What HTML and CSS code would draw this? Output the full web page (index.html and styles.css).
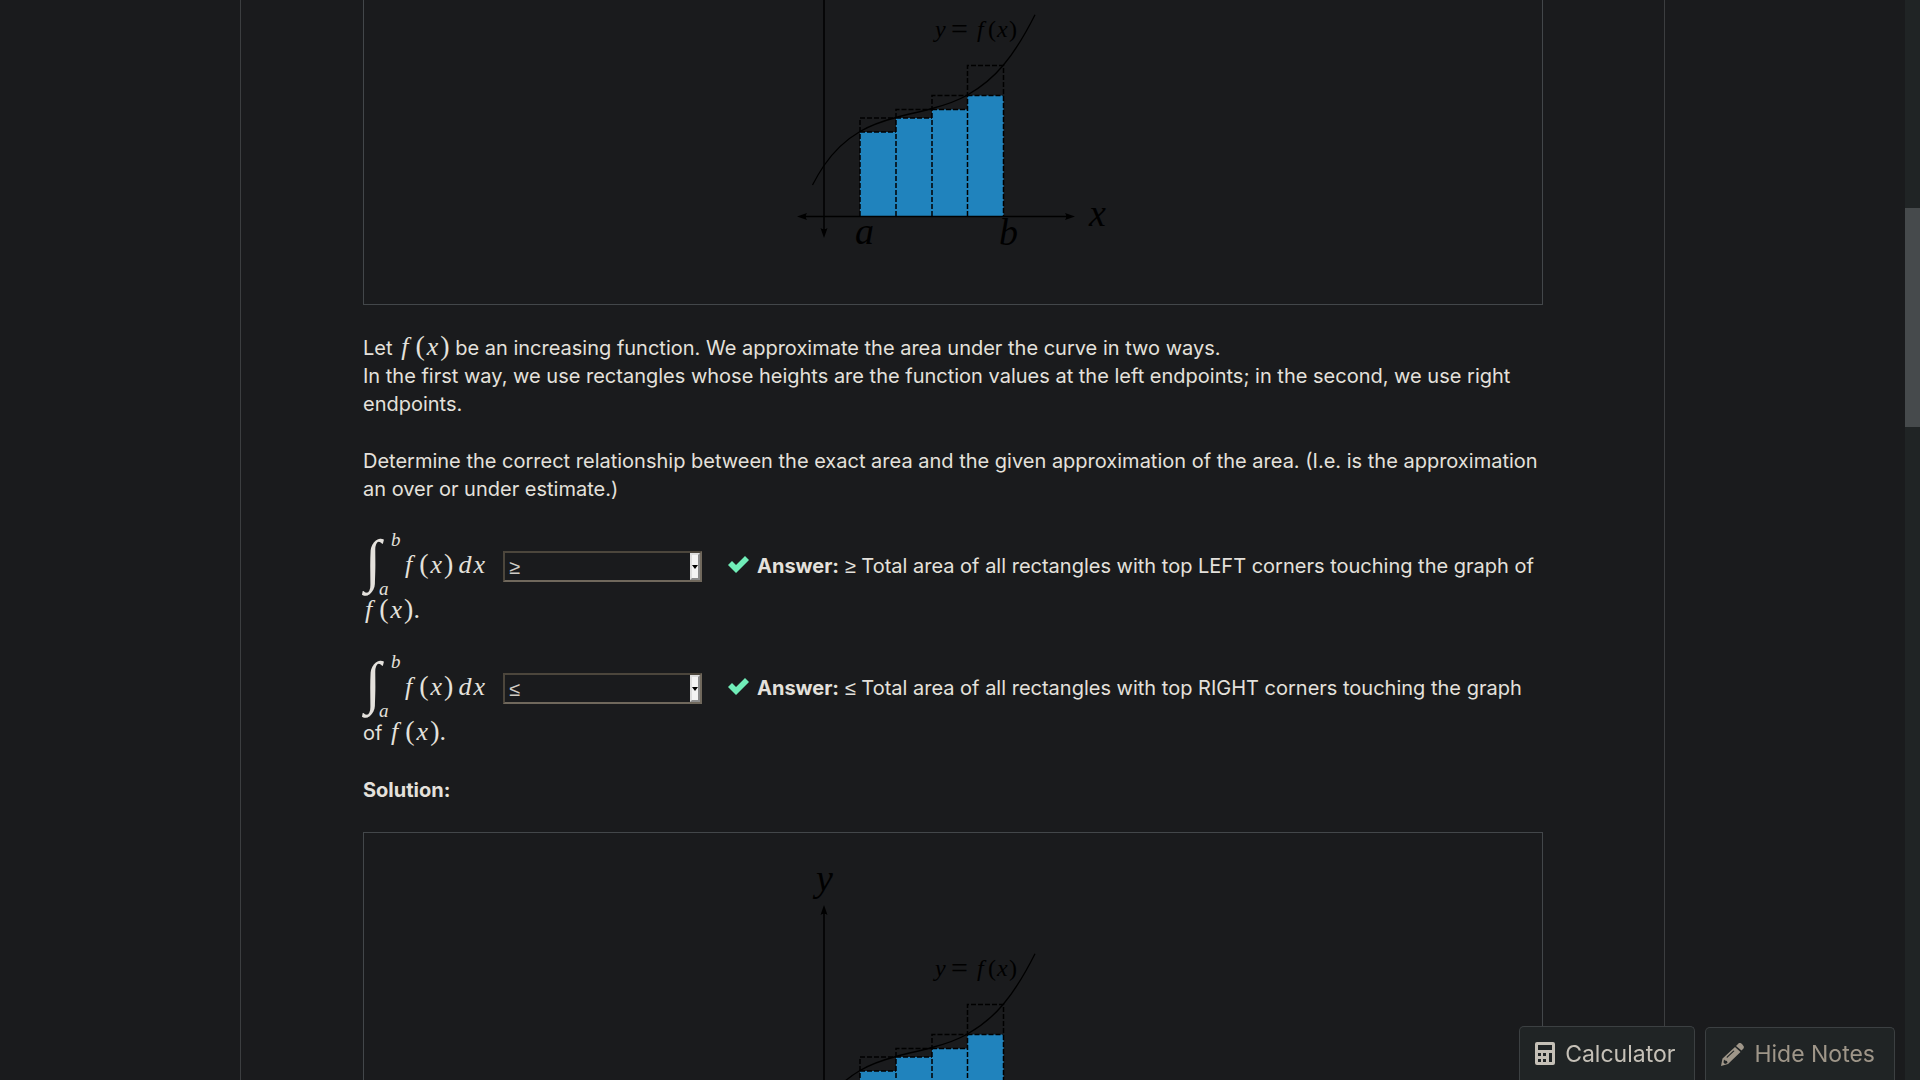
FILE: index.html
```html
<!DOCTYPE html>
<html lang="en">
<head>
<meta charset="utf-8">
<title>Area under an increasing function</title>
<link rel="stylesheet" href="styles.css">
</head>
<body>
<svg class="defs" aria-hidden="true">
  <symbol id="graph" viewBox="0 0 345 410" preserveAspectRatio="xMinYMin">
    <g class="bars">
      <path d="M80 238h36v84.500h-36zM116 224h36v98.500h-36zM152 215.500h35.500v107H152zM187.500 201.500h36v121h-36z"/>
    </g>
    <g class="dashes">
      <path d="M80 322V224H116M116 322V215.500H152M152 322V201.500H187.500M187.500 322V171.500H223.500V322M80 238H116M116 224H152M152 215.500H187.500M187.500 201.500H223.500"/>
    </g>
    <path class="curve" d="M32.500 291C36.300 283.700 40.200 277.100 44 271.500C56 254.100 68 244.500 80 237.500C92 230.500 104 226.700 116 223.500C128 220.300 140 217.700 152 214.500C163.800 211.400 175.700 207.800 187.500 201C199.500 194.100 211.500 185.500 223.500 171C234 158.300 244.500 141.700 255 120.700"/>
    <path class="axis" d="M22 322.500H290M44 78V338"/>
    <path d="M17 322.500L27 319Q24.500 322.500 27 326zM295 322.500L285 319Q287.500 322.500 285 326zM44 72L40.500 82Q44 79.500 47.500 82zM44 344L40.500 334Q44 336.500 47.500 334z"/>
    <g class="big">
      <text x="36" y="58">y</text>
      <text x="309" y="332">x</text>
      <text x="75" y="350">a</text>
      <text x="219" y="351">b</text>
    </g>
    <g class="small">
      <text x="155" y="143">y</text>
      <text x="171" y="145" class="equals">=</text>
      <text x="197" y="143">f</text>
      <text x="208" y="143" class="upright">(</text>
      <text x="217" y="143">x</text>
      <text x="229" y="143" class="upright">)</text>
    </g>
  </symbol>
  <symbol id="check" viewBox="0 0 21 17"><path d="M0 9L4 5L8 9L17 0L21 4L8 17z"/></symbol>
</svg>

<div class="window">
  <main class="page">
    <article class="problem">
      <figure class="figure"><svg class="graph" role="img" aria-label="Graph of f with four rectangles"><use href="#graph"/></svg></figure>

      <p>Let <span class="math"><i class="f">f</i><span class="paren">(</span><i class="x">x</i><span class="paren">)</span></span> be an increasing function. We approximate the area under the curve in two ways.<br>
      In the first way, we use rectangles whose heights are the function values at the left endpoints; in the second, we use right endpoints.</p>

      <p>Determine the correct relationship between the exact area and the given approximation of the area. (I.e. is the approximation an over or under estimate.)</p>

      <p><span class="integral"><span class="sign">∫</span><span class="limits"><i class="upper">b</i><i class="lower">a</i></span><span class="math"><i class="f">f</i><span class="paren">(</span><i class="x">x</i><span class="paren">)</span><i class="d">d</i><i class="x">x</i></span></span><span class="picker"><select aria-label="Relation for left corners"><option>≥</option><option>≤</option></select><span class="arrow"></span></span><svg class="check"><use href="#check"/></svg><b>Answer:</b> <span class="relation">≥</span> Total area of all rectangles with top LEFT corners touching the graph of <span class="math"><i class="f first">f</i><span class="paren">(</span><i class="x">x</i><span class="paren">)</span>.</span></p>

      <p><span class="integral"><span class="sign">∫</span><span class="limits"><i class="upper">b</i><i class="lower">a</i></span><span class="math"><i class="f">f</i><span class="paren">(</span><i class="x">x</i><span class="paren">)</span><i class="d">d</i><i class="x">x</i></span></span><span class="picker"><select aria-label="Relation for right corners"><option>≤</option><option>≥</option></select><span class="arrow"></span></span><svg class="check"><use href="#check"/></svg><b>Answer:</b> <span class="relation">≤</span> Total area of all rectangles with top RIGHT corners touching the graph of <span class="math"><i class="f">f</i><span class="paren">(</span><i class="x">x</i><span class="paren">)</span>.</span></p>

      <p><b>Solution:</b></p>

      <figure class="figure"><svg class="graph" role="img" aria-label="Graph of f with four rectangles"><use href="#graph"/></svg></figure>
    </article>
  </main>
  <div class="track"><div class="thumb"></div></div>
</div>

<div class="tools">
  <button class="tool calculator" type="button">
    <svg class="icon-calc" viewBox="0 0 20 23"><path fill-rule="evenodd" d="M2 0H18Q20 0 20 2V21Q20 23 18 23H2Q0 23 0 21V2Q0 0 2 0zM3 3V8H17V3zM3 11V14H6V11zM8 11V14H11V11zM14 11V20H17V11zM3 17V20H6V17zM8 17V20H11V17z"/></svg>Calculator</button>
  <button class="tool notes" type="button">
    <svg class="icon-pen" viewBox="0 0 23 23"><path fill-rule="evenodd" d="M16 2L18 0Q19.500 -.500 21 1L22.500 3Q23.500 4.500 22 6L20.500 7.500L15 3zM14 4L19.500 9L7 21L0 23L1.500 15.500zM3 16.500L2.500 19.500L4 21L6.500 20L6 18L4 17.500zM6 15L13.500 8L12.500 7.500L5.500 14z"/></svg>Hide Notes</button>
</div>
</body>
</html>
```
FILE: styles.css
```css
* { box-sizing: border-box; }

body {
  margin: 0;
  background: #1a1b1d;
  color: #e4e1dc;
  font: 20px/28px Inter, "Open Sans", sans-serif;
}

.defs { display: none; }

.window {
  display: flex;
  height: 100vh;
  overflow: hidden;
}

.page {
  flex: 1;
  padding: 0 240px;
}

/* scrolled a little way into the lesson */
.problem {
  margin-top: -107px;
  padding: 0 121px 0 122px;
  border: solid #3c3e40;
  border-width: 0 1px;
}

p { margin: 29px 0 0; }
p + .figure { margin-top: 28px; }

.figure {
  display: flex;
  justify-content: center;
  margin: 0;
  border: 1px solid #43474a;
}

.graph { width: 347px; height: 410px; }
.bars { fill: #2083bd; }
.dashes { fill: none; stroke: #000; stroke-width: 1.500; stroke-dasharray: 5 2; }
.curve { fill: none; stroke: #000; stroke-width: 1.300; }
.axis { stroke: #000; stroke-width: 1.500; }
.big { font: italic 38px "Liberation Serif", serif; }
.small { font: italic 24px "Liberation Serif", serif; }
.upright { font-style: normal; }
.equals { font-style: normal; font-size: 30px; }

.math {
  font: 26px/20px "Liberation Serif", serif;
  white-space: nowrap;
}
.f { margin: 0 7px 0 3px; }
.first { margin-left: 2px; }
.x { margin: 0 2px; }
.d { margin-left: 5px; }
.paren { font-size: 28px; }

.integral {
  display: inline-flex;
  align-items: center;
  width: 140px;
  height: 65px;
  vertical-align: -7px;
}
.sign {
  width: 16px;
  padding: 0 0 8px 2px;
  font: italic 58px/58px "Liberation Serif", serif;
}
.limits {
  display: flex;
  flex-direction: column;
  justify-content: space-between;
  width: 23px;
  height: 65px;
  font: 19px/16px "Liberation Serif", serif;
}
.upper { padding-left: 12px; }

.relation { font-family: "Noto Sans", sans-serif; line-height: 20px; }

.picker {
  display: inline-block;
  position: relative;
  width: 199px;
  height: 31px;
  vertical-align: -1px;
}
.picker select {
  display: block;
  width: 100%;
  height: 100%;
  padding: 0 4px;
  appearance: none;
  border: 2px solid;
  border-color: #4c463c #70685c #70685c #4c463c;
  border-radius: 0;
  background: #1a1b1d;
  color: #d0ccc5;
  font: 20px/26px "Noto Sans", sans-serif;
}
.arrow {
  display: flex;
  align-items: center;
  justify-content: center;
  position: absolute;
  top: 2px;
  right: 2px;
  bottom: 2px;
  width: 10px;
  border: 2px solid;
  border-color: #dedede #8c8c8c #8c8c8c #dedede;
  background: #f4f4f4;
  pointer-events: none;
}
.arrow::before {
  content: "";
  flex: none;
  border: solid transparent;
  border-width: 4px 3px 0;
  border-top-color: #000;
}

.check {
  width: 21px;
  height: 17px;
  margin: 0 8px 0 26px;
  fill: #70edb8;
}

.track { width: 15px; padding-top: 208px; background: #202425; }
.thumb { height: 219px; background: #464a4c; }

.tools {
  display: flex;
  align-items: flex-end;
  gap: 10px;
  position: fixed;
  right: 25px;
  bottom: 0;
}
.tool {
  display: flex;
  align-items: center;
  height: 53px;
  padding: 0 19px 0 15px;
  border: 1px solid #3c4042;
  border-bottom: 0;
  border-radius: 5px 5px 0 0;
  background: #202425;
  color: #9f9689;
  font: 23px/28px Inter, sans-serif;
}
.tool svg { fill: currentColor; }
.calculator { height: 54px; color: #c5c0b7; }
.icon-calc { width: 20px; height: 23px; margin-right: 10px; }
.icon-pen { width: 23px; height: 23px; margin-right: 10px; }
```
